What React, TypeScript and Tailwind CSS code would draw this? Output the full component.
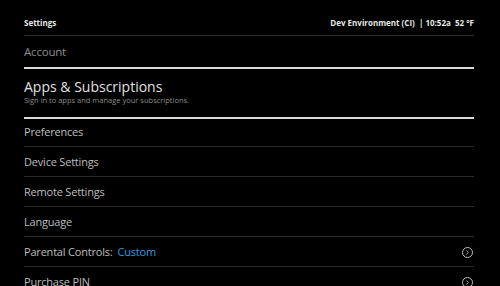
import { ChevronRight } from "lucide-react";

const rows = [
  { label: "Device Settings" },
  { label: "Remote Settings" },
  { label: "Language" },
  { label: "Parental Controls:", value: "Custom", arrow: true },
  { label: "Purchase PIN", arrow: true },
];

function CircleArrow() {
  return (
    <span className="flex h-[11px] w-[11px] items-center justify-center rounded-full border border-[#bdbdbd]">
      <ChevronRight size={7} strokeWidth={3} color="#bdbdbd" />
    </span>
  );
}

export default function App() {
  return (
    <div
      className="h-[286px] w-[500px] overflow-hidden bg-black pl-6 pr-[26px]"
      style={{ fontFamily: '"Open Sans", "Noto Sans", sans-serif' }}
    >
      <div className="flex h-[36px] items-end justify-between border-b border-[#2a2a2a] pb-[6px] text-[8px] font-bold text-[#e6e6e6]">
        <span>Settings</span>
        <span>Dev Environment (CI)&nbsp; | 10:52a&nbsp; 52 °F</span>
      </div>

      <div className="flex h-[31px] items-center pt-[1px] text-[11.5px] tracking-[-0.2px] text-[#8c8c8c]">
        Account
      </div>
      <div className="h-[2px] bg-[#d9d9d9]" />

      <div className="flex h-[48px] flex-col justify-center pb-[4px]">
        <div className="text-[14px] leading-[18px] text-[#e0e0e0]">
          Apps &amp; Subscriptions
        </div>
        <div className="text-[7.5px] leading-[9px] text-[#8a8a8a]">
          Sign in to apps and manage your subscriptions.
        </div>
      </div>
      <div className="h-[2px] bg-[#d9d9d9]" />

      <div className="flex h-[28px] items-center border-b border-[#2a2a2a] text-[11px] tracking-[-0.2px] text-[#bdbdbd]">
        Preferences
      </div>

      {rows.map((r) => (
        <div
          key={r.label}
          className="flex h-[30px] items-center justify-between border-b border-[#2a2a2a] pt-[1px] text-[11px] tracking-[-0.2px] text-[#bdbdbd]"
        >
          <span>
            {r.label}
            {r.value && <span className="ml-[5px] text-[#2b9be0]">{r.value}</span>}
          </span>
          {r.arrow && <span className="mr-[1px]"><CircleArrow /></span>}
        </div>
      ))}
    </div>
  );
}
